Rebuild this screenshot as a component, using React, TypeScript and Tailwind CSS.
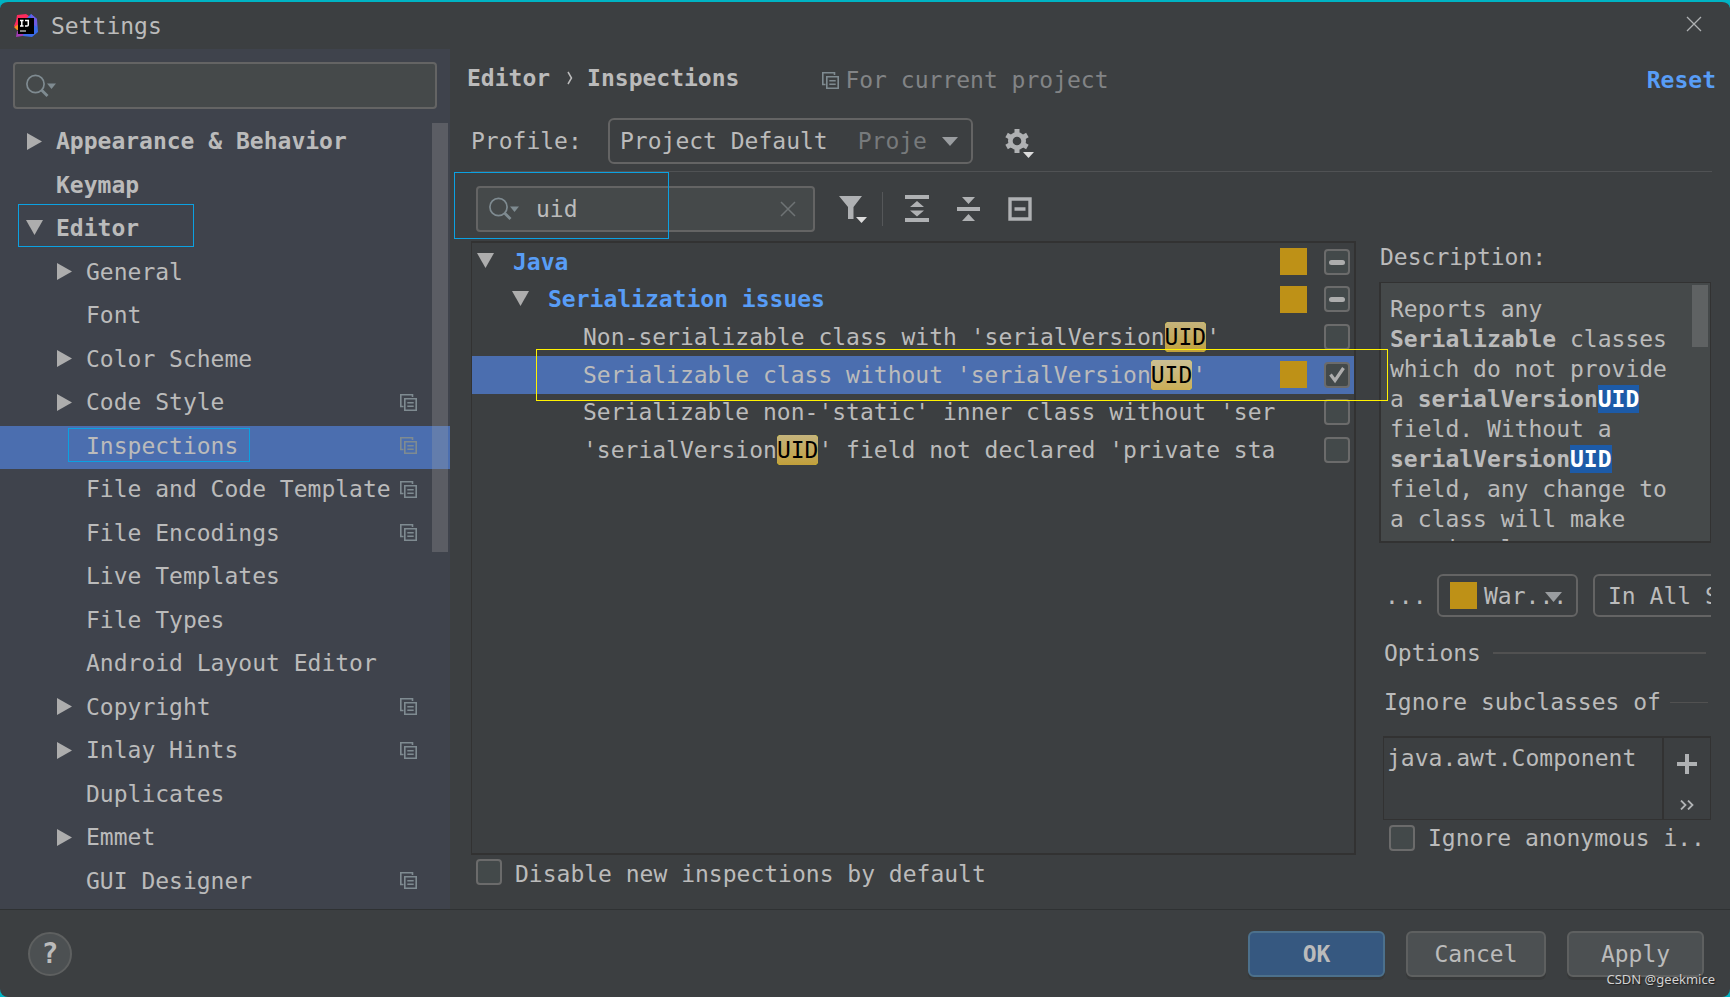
import { useState } from "react";
import type { ReactNode } from "react";

type NavItem = {
  label: string;
  level: 0 | 1;
  arrow?: "right" | "down";
  shared?: boolean;
  boxed?: boolean;
};

const navItems: NavItem[] = [
  { label: "Appearance & Behavior", level: 0, arrow: "right" },
  { label: "Keymap", level: 0 },
  { label: "Editor", level: 0, arrow: "down", boxed: true },
  { label: "General", level: 1, arrow: "right" },
  { label: "Font", level: 1 },
  { label: "Color Scheme", level: 1, arrow: "right" },
  { label: "Code Style", level: 1, arrow: "right", shared: true },
  { label: "Inspections", level: 1, shared: true, boxed: true },
  { label: "File and Code Template", level: 1, shared: true },
  { label: "File Encodings", level: 1, shared: true },
  { label: "Live Templates", level: 1 },
  { label: "File Types", level: 1 },
  { label: "Android Layout Editor", level: 1 },
  { label: "Copyright", level: 1, arrow: "right", shared: true },
  { label: "Inlay Hints", level: 1, arrow: "right", shared: true },
  { label: "Duplicates", level: 1 },
  { label: "Emmet", level: 1, arrow: "right" },
  { label: "GUI Designer", level: 1, shared: true },
];

type Inspection = {
  before: string;
  match: string;
  after: string;
  warning?: boolean;
};

const inspections: Inspection[] = [
  { before: "Non-serializable class with 'serialVersion", match: "UID", after: "'" },
  { before: "Serializable class without 'serialVersion", match: "UID", after: "'", warning: true },
  { before: "Serializable non-'static' inner class without 'ser", match: "", after: "" },
  { before: "'serialVersion", match: "UID", after: "' field not declared 'private sta" },
];

function Arrow({ direction }: { direction?: "right" | "down" }) {
  return (
    <svg width="17" height="17" viewBox="0 0 17 17" className="shrink-0" fill="#adadad" aria-hidden="true">
      {direction === "right" && <path d="M1 0L16 8.5L1 17Z" />}
      {direction === "down" && <path d="M0 0H17L8.5 15Z" />}
    </svg>
  );
}

function SharedIcon() {
  return (
    <svg width="17" height="17" viewBox="0 0 17 17" fill="none" stroke="#7f8b91" strokeWidth="1.6" className="shrink-0" aria-hidden="true">
      <path d="M12.5 3V.8H.8V12.5H3.5" />
      <path d="M4.8 4.8H16.2V16.2H4.8Z" />
      <path d="M7.3 8.7H13.7M7.3 12.3H13.7" />
    </svg>
  );
}

function SearchIcon() {
  return (
    <svg width="30" height="24" viewBox="0 0 30 24" fill="none" stroke="#7f8b91" strokeWidth="1.7" className="shrink-0" aria-hidden="true">
      <circle cx="9.5" cy="10" r="8.6" />
      <path d="M15.5 16L21.5 22" strokeWidth="2.8" />
      <path d="M21 9.5H30L25.5 15Z" fill="#7f8b91" stroke="none" />
    </svg>
  );
}

function Logo() {
  return (
    <svg width="24" height="24" viewBox="0 0 24 24" aria-hidden="true">
      <path d="M3 1L12 0L18 4L10 14L4 15L0 12L2 7Z" fill="#fc2b5c" />
      <path d="M0 13L5 10L7 17L3 16Z" fill="#f68b1f" />
      <path d="M2 23L3 17L8 18L14 21Z" fill="#a23bb5" />
      <path d="M13 4L17 0L23 5L24 18L18 23L9 22Z" fill="#3a6bea" />
      <path d="M17 0L23 5L23 13L17 9Z" fill="#6d5be2" />
      <rect x="4" y="4" width="16" height="16" fill="#000" />
      <path d="M6 6.5H9.5M7.8 6.5V12M6 12H9.5M11 6.5H14.3V11Q14.3 12 13 12H11" fill="none" stroke="#fff" strokeWidth="1.5" />
      <path d="M6 17H12" stroke="#aaa" strokeWidth="1.3" />
    </svg>
  );
}

function CheckBox({ id, label, checked, onChange, mixed }: {
  id?: string;
  label?: string;
  checked: boolean;
  onChange: () => void;
  mixed?: boolean;
}) {
  return (
    <span className="relative block h-[26px] w-[26px] shrink-0">
      <input
        id={id}
        type="checkbox"
        aria-label={label}
        checked={checked}
        onChange={onChange}
        className="block h-[26px] w-[26px] appearance-none rounded border-2 border-[#6b6b6b] bg-[#43494a]"
      />
      {mixed && <span className="pointer-events-none absolute top-[11px] left-[5px] h-[5px] w-4 rounded-sm bg-[#adadad]" />}
      {!mixed && checked && (
        <svg viewBox="0 0 26 26" className="pointer-events-none absolute inset-0" fill="none" stroke="#adadad" strokeWidth="3.2">
          <path d="M6.5 12.5L11 18.5L19.5 6" />
        </svg>
      )}
    </span>
  );
}

function Severity() {
  return <span className="block h-[27px] w-[27px] shrink-0 bg-[#be9117]" />;
}

function InspectionRow({ children, warning, selected, checkbox }: {
  children: ReactNode;
  warning?: boolean;
  selected?: boolean;
  checkbox: ReactNode;
}) {
  return (
    <div className={`flex min-h-0 min-w-0 items-center pr-1 ${selected ? "bg-[#4b6eaf]" : ""}`}>
      <div className="flex min-w-0 flex-1 items-center overflow-hidden whitespace-pre">{children}</div>
      <div className="ml-1 flex w-[70px] shrink-0 items-center justify-between">
        <span className="w-[27px]">{warning && <Severity />}</span>
        {checkbox}
      </div>
    </div>
  );
}

function Sidebar() {
  const [active, setActive] = useState("Inspections");

  return (
    <aside className="flex w-[450px] shrink-0 flex-col bg-[#3f434c] pt-[13px]">
      <label className="mr-[13px] ml-[13px] flex h-[47px] items-center rounded border-2 border-[#646464] bg-[#45494a] pl-[11px]">
        <SearchIcon />
        <input type="text" aria-label="Search settings" className="min-w-0 flex-1 bg-transparent pl-2 outline-none" />
      </label>
      <nav className="relative mt-3 mb-[5px] flex flex-1 flex-col">
        {navItems.map((item) => (
          <button
            key={item.label}
            onClick={() => setActive(item.label)}
            className={`relative flex w-full flex-1 items-center pr-[33px] pb-[3px] text-left ${
              item.level === 0 ? "pl-[26px] font-bold" : "pl-14"
            } ${item.label === active ? "bg-[#4b6eaf]" : ""}`}
          >
            <Arrow direction={item.arrow} />
            <span className="ml-[13px] flex-1 whitespace-nowrap">{item.label}</span>
            {item.shared && <SharedIcon />}
            {item.boxed && item.level === 0 && (
              <span className="absolute -top-1 left-[18px] h-[43px] w-44 border border-[#0ba1e2]" />
            )}
            {item.boxed && item.level === 1 && (
              <span className="absolute top-0.5 left-[68px] h-[34px] w-[182px] border border-[#0ba1e2]" />
            )}
          </button>
        ))}
        <span className="pointer-events-none absolute top-0.5 left-[432px] h-[429px] w-4 bg-[#a6a6a6]/27" />
      </nav>
    </aside>
  );
}

function Toolbar() {
  return (
    <div className="relative flex h-[70px] items-center border-t border-[#505254] pt-1 pl-[5px]">
      <label className="flex h-[46px] w-[339px] items-center rounded border-2 border-[#646464] bg-[#45494a] pr-[17px] pl-[11px]">
        <SearchIcon />
        <input type="text" aria-label="Filter inspections" defaultValue="uid" className="min-w-0 flex-1 bg-transparent pl-[17px] outline-none" />
        <button aria-label="Clear filter">
          <svg width="16" height="16" viewBox="0 0 16 16" stroke="#6e7375" strokeWidth="1.5">
            <path d="M1 1L15 15M15 1L1 15" />
          </svg>
        </button>
      </label>
      <button aria-label="Filter" className="ml-6">
        <svg width="28" height="28" viewBox="0 0 28 28" fill="#afb1b3">
          <path d="M0 1H23L14.5 12V24H9V12Z" />
          <path d="M17 22H28L22.5 28Z" fill="#dcdcdc" />
        </svg>
      </button>
      <span className="ml-[15px] h-[34px] w-px bg-[#555759]" />
      <button aria-label="Expand all" className="ml-[22px]">
        <svg width="24" height="28" viewBox="0 0 24 28" fill="#afb1b3">
          <path d="M0 0H24V4H0ZM0 23H24V27H0Z" />
          <path d="M5 12L12 6L19 12ZM5 15.500H19L12 21.500Z" />
        </svg>
      </button>
      <button aria-label="Collapse all" className="ml-7">
        <svg width="23" height="28" viewBox="0 0 23 28" fill="#afb1b3">
          <path d="M0 12H23V16H0Z" />
          <path d="M5 2H18L11.500 9ZM11.500 19L18 26H5Z" />
        </svg>
      </button>
      <button aria-label="Reset to empty" className="ml-7">
        <svg width="24" height="24" viewBox="0 0 24 24">
          <path d="M2 2H22V22H2Z" fill="none" stroke="#afb1b3" strokeWidth="3.4" />
          <path d="M6.500 10.300H17.500V13.700H6.500Z" fill="#afb1b3" />
        </svg>
      </button>
      <span className="pointer-events-none absolute top-0 -left-[17px] h-[67px] w-[215px] border border-[#0ba1e2]" />
    </div>
  );
}

function InspectionTree() {
  const [checked, setChecked] = useState([false, true, false, false]);
  const [selected, setSelected] = useState(1);
  const toggle = (index: number) => setChecked(checked.map((c, i) => (i === index ? !c : c)));

  return (
    <div className="relative flex-1 border-2 border-l border-[#323232]">
      <div className="grid h-[226px] grid-cols-1 grid-rows-6">
        <InspectionRow warning checkbox={<CheckBox label="Java" checked={false} mixed onChange={() => {}} />}>
          <span className="flex items-center pl-[5px] font-bold text-[#589df6]">
            <Arrow direction="down" />
            <span className="ml-[19px]">Java</span>
          </span>
        </InspectionRow>
        <InspectionRow warning checkbox={<CheckBox label="Serialization issues" checked={false} mixed onChange={() => {}} />}>
          <span className="flex items-center pl-10 font-bold text-[#589df6]">
            <Arrow direction="down" />
            <span className="ml-[19px]">Serialization issues</span>
          </span>
        </InspectionRow>
        {inspections.map((item, index) => (
          <InspectionRow
            key={item.before}
            warning={item.warning}
            selected={index === selected}
            checkbox={<CheckBox label={item.before + item.match + item.after} checked={checked[index]} onChange={() => toggle(index)} />}
          >
            <span className="pl-[111px]" onClick={() => setSelected(index)}>
              {item.before}
              {item.match && (
                <mark
                  className={`rounded bg-linear-to-b py-0.5 text-black ${
                    index === selected ? "from-[#cbbf94] to-[#cbae55]" : "from-[#c5b47c] to-[#c2a03a]"
                  }`}
                >
                  {item.match}
                </mark>
              )}
              {item.after}
            </span>
          </InspectionRow>
        ))}
      </div>
      <span className="pointer-events-none absolute top-[106px] left-16 z-10 h-[52px] w-[852px] border border-[#fff200]" />
    </div>
  );
}

function Details() {
  const [ignoreAnonymous, setIgnoreAnonymous] = useState(false);

  return (
    <section className="flex w-[333px] shrink-0 flex-col pt-px">
      <h2 className="pl-px leading-[30px]">Description:</h2>
      <div className="relative mt-2.5 mr-px h-[261px] overflow-hidden border-2 border-t border-r border-[#323232] bg-[#45494a]">
        <p className="pt-[11px] pr-5 pl-[9px] leading-[30px]">
          Reports any <b>Serializable</b> classes which do not provide a{" "}
          <b>serialVersion<mark className="bg-[#1d5ba8] py-px text-white">UID</mark></b> field. Without a{" "}
          <b>serialVersion<mark className="bg-[#1d5ba8] py-px text-white">UID</mark></b> field, any change to a class will make previously
        </p>
        <span className="absolute top-0.5 right-0.5 h-[62px] w-4 bg-[#5f6263]" />
      </div>
      <div className="mt-[31px] mr-px flex items-center overflow-hidden">
        <span className="w-[58px] shrink-0 pl-1.5">...</span>
        <button aria-label="Severity" className="relative flex h-[43px] w-[141px] shrink-0 items-center rounded-md border-2 border-[#646464] pl-[11px]">
          <Severity />
          <span className="ml-[7px]">War...</span>
          <svg width="17" height="10" viewBox="0 0 17 10" fill="#9a9da0" className="absolute top-4 right-3.5" aria-hidden="true">
            <path d="M0 0H17L8.500 10Z" />
          </svg>
        </button>
        <button className="ml-[15px] h-[43px] w-[220px] shrink-0 rounded-md border-2 border-[#646464] pl-[13px] text-left whitespace-nowrap">
          In All Scopes
        </button>
      </div>
      <div className="mt-[21px] flex items-center gap-3 pr-1.5 pl-[5px] leading-[30px]">
        <h3>Options</h3>
        <span className="h-0.5 flex-1 bg-[#515151]" />
      </div>
      <div className="mt-[19px] flex items-center gap-[9px] pr-1 pl-[5px] leading-[30px]">
        <h4 className="whitespace-nowrap">Ignore subclasses of</h4>
        <span className="h-px flex-1 bg-[#515151]" />
      </div>
      <div className="mt-[19px] mr-px ml-1 flex h-[84px] border border-t-2 border-[#323232]">
        <div className="min-w-0 flex-1 pt-[5px] pl-[3px] leading-[30px]">java.awt.Component</div>
        <div className="flex w-12 flex-col items-center border-l-2 border-[#323232] pt-4">
          <button aria-label="Add">
            <svg width="20" height="20" viewBox="0 0 20 20" stroke="#afb1b3" strokeWidth="4">
              <path d="M10 0V20M0 10H20" />
            </svg>
          </button>
          <button aria-label="More actions" className="mt-[26px]">
            <svg width="14" height="10" viewBox="0 0 14 10" fill="none" stroke="#afb1b3" strokeWidth="1.8">
              <path d="M1 .5L5.500 5L1 9.500M8 .5L12.500 5L8 9.500" />
            </svg>
          </button>
        </div>
      </div>
      <div className="mt-[3px] flex items-center gap-[13px] overflow-hidden pl-2.5 leading-[30px] whitespace-nowrap">
        <CheckBox id="ignore-anonymous" checked={ignoreAnonymous} onChange={() => setIgnoreAnonymous(!ignoreAnonymous)} />
        <label htmlFor="ignore-anonymous">Ignore anonymous i..</label>
      </div>
    </section>
  );
}

export default function App() {
  const [disableNew, setDisableNew] = useState(false);

  return (
    <div className="min-h-screen bg-[#00b4c4] font-['DejaVu_Sans_Mono','Liberation_Mono',monospace] text-[23px] leading-[30px] text-[#bbbbbb]">
      <div className="relative flex min-h-screen flex-col overflow-hidden rounded-lg border-t-2 border-[#00b4c4] bg-[#3c3f41]">
        {/* Title bar */}
        <header className="flex h-[47px] items-center pr-7 pl-3.5">
          <Logo />
          <h1 className="ml-[13px]">Settings</h1>
          <button aria-label="Close" className="ml-auto pb-1">
            <svg width="16" height="16" viewBox="0 0 16 16" stroke="#afb1b3" strokeWidth="1.3">
              <path d="M1 1L15 15M15 1L1 15" />
            </svg>
          </button>
        </header>

        <div className="flex flex-1">
          <Sidebar />

          <main className="flex min-w-0 flex-1 flex-col pr-[18px] pl-[21px]">
            {/* Breadcrumb */}
            <div className="-mr-1 -ml-1 flex h-[59px] items-center pt-[3px]">
              <h2 className="pb-1 font-bold">Editor</h2>
              <svg width="6" height="14" viewBox="0 0 6 14" fill="none" stroke="#bbbbbb" strokeWidth="1.5" className="mb-1 ml-[17px]" aria-hidden="true">
                <path d="M1 1L4.500 7L1 13" />
              </svg>
              <h2 className="ml-3.5 pb-1 font-bold">Inspections</h2>
              <span className="ml-[83px] flex items-center gap-1.5 text-[#828486]">
                <SharedIcon />
                For current project
              </span>
              <button className="ml-auto font-bold text-[#589df6]">Reset</button>
            </div>

            {/* Profile */}
            <div className="flex h-[63px] items-start pt-2.5">
              <span className="w-[137px] pt-2">Profile:</span>
              <button aria-label="Profile" className="flex h-[46px] w-[365px] items-center rounded-md border-2 border-[#646464] pr-[13px] pl-2.5">
                <span>Project Default</span>
                <span className="ml-[30px] text-[#777a7c]">Proje</span>
                <svg width="16" height="9" viewBox="0 0 16 9" fill="#9a9da0" className="ml-auto" aria-hidden="true">
                  <path d="M0 0H16L8 9Z" />
                </svg>
              </button>
              <button aria-label="Profile actions" className="mt-[11px] ml-8">
                <svg width="30" height="30" viewBox="0 0 30 30">
                  <g fill="#afb1b3">
                    <path d="M9.500 0H14.500V24H9.500Z" />
                    <path d="M9.500 0H14.500V24H9.500Z" transform="rotate(60 12 12)" />
                    <path d="M9.500 0H14.500V24H9.500Z" transform="rotate(120 12 12)" />
                    <circle cx="12" cy="12" r="9" />
                  </g>
                  <circle cx="12" cy="12" r="4.300" fill="#3c3f41" />
                  <path d="M18 23H29L23.500 29Z" fill="#dcdcdc" />
                </svg>
              </button>
            </div>

            <Toolbar />

            <div className="flex flex-1 gap-[23px]">
              <div className="flex min-w-0 flex-1 flex-col">
                <InspectionTree />
                <div className="flex h-[54px] items-start gap-[13px] pt-1 pl-[5px]">
                  <CheckBox id="disable-new" checked={disableNew} onChange={() => setDisableNew(!disableNew)} />
                  <label htmlFor="disable-new">Disable new inspections by default</label>
                </div>
              </div>
              <Details />
            </div>
          </main>
        </div>

        {/* Footer */}
        <footer className="flex h-[88px] shrink-0 items-center gap-[21px] border-t border-[#2f3233] pr-[26px] pl-7">
          <button aria-label="Help" className="mr-auto flex h-11 w-11 items-center justify-center rounded-full border-2 border-[#5e6060] bg-[#4c5052] text-[28px] font-bold">
            ?
          </button>
          <button className="h-[46px] w-[137px] rounded-md border-2 border-[#4c708c] bg-[#365880] font-bold shadow-[0_3px_0_#37393a]">OK</button>
          <button className="h-[46px] w-[140px] rounded-md border-2 border-[#5e6060] bg-[#4c5052] shadow-[0_3px_0_#37393a]">Cancel</button>
          <button className="h-[46px] w-[137px] rounded-md border-2 border-[#5e6060] bg-[#4c5052] shadow-[0_3px_0_#37393a]">Apply</button>
        </footer>

        <span className="absolute right-[15px] bottom-2 font-['Noto_Sans',sans-serif] text-[13px] leading-5 text-[#d2d2d2] [text-shadow:1px_1px_1px_#222]">
          CSDN @geekmice
        </span>
      </div>
    </div>
  );
}
